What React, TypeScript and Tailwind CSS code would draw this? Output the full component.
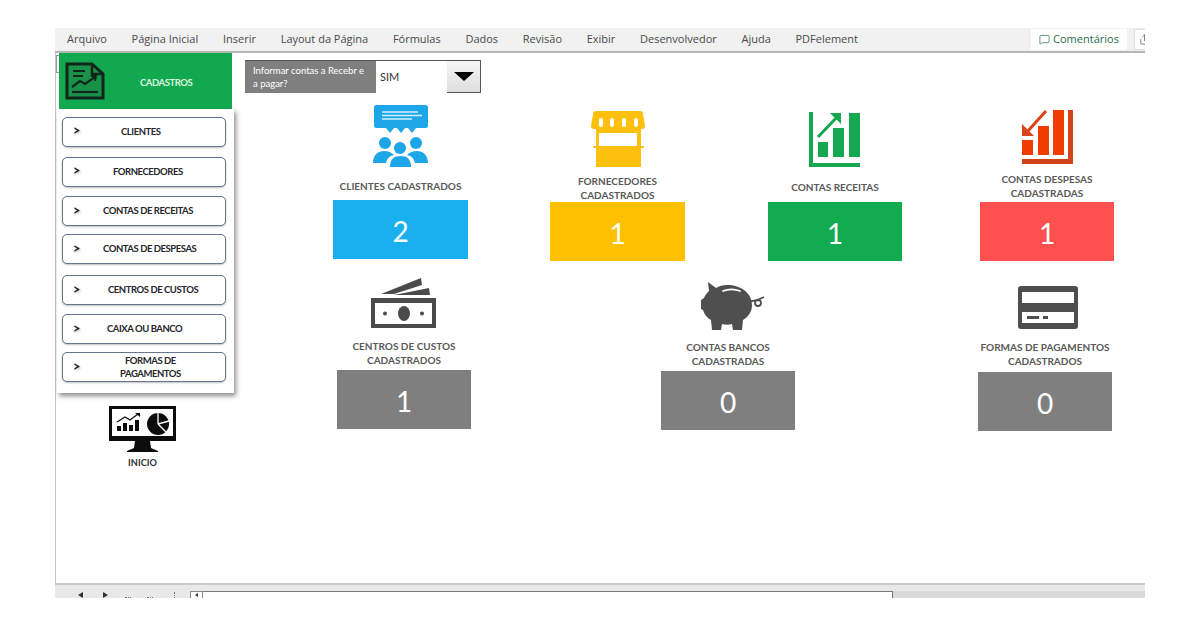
import { MessageSquare, Share } from "lucide-react";

const tabs = [
  "Arquivo",
  "Página Inicial",
  "Inserir",
  "Layout da Página",
  "Fórmulas",
  "Dados",
  "Revisão",
  "Exibir",
  "Desenvolvedor",
  "Ajuda",
  "PDFelement",
];

const menu = [
  { label: ["CLIENTES"], top: "mt-[8px]", shift: "ml-[18px]", lift: "pb-[2px]" },
  { label: ["FORNECEDORES"], top: "mt-[10px]", shift: "ml-[10px]", lift: "pb-[2px]" },
  { label: ["CONTAS DE RECEITAS"], top: "mt-[9px]", shift: "ml-0", lift: "pb-[1px]" },
  { label: ["CONTAS DE DESPESAS"], top: "mt-[8px]", shift: "ml-0", lift: "pb-[1px]" },
  { label: ["CENTROS DE CUSTOS"], top: "mt-[11px]", shift: "ml-[5px]", lift: "pb-[1px]" },
  { label: ["CAIXA OU BANCO"], top: "mt-[9px]", shift: "ml-[4px]", lift: "pb-[1px]" },
  { label: ["FORMAS DE", "PAGAMENTOS"], top: "mt-[8px]", shift: "ml-[17px]", lift: "pb-[1px]" },
];

function ReportIcon() {
  return (
    <svg viewBox="0 0 40 38" className="w-[40px] h-[38px]" fill="none" stroke="#10261a" strokeWidth="3">
      <path d="M2 2h25l11 10v24H2z" fill="#1a9149" />
      <path d="M27 2v10h11" strokeWidth="2.5" />
      <path d="M8 9h12M8 14h10" strokeWidth="2" />
      <path d="M7 25l8-6 5 3 10-7" strokeWidth="2.2" />
      <path d="M26 14l5 0-1 5" strokeWidth="1.8" />
      <path d="M7 30h26" strokeWidth="2.2" />
    </svg>
  );
}

function PeopleIcon() {
  return (
    <svg viewBox="0 0 56 62" className="w-[56px] h-[62px]" fill="#1ea7e8">
      <rect x="1" y="0" width="54" height="23" rx="2.500" />
      <path d="M13 23h8l-4 5zM24 23h8l-4 5zM35 23h8l-4 5z" />
      <path d="M9 7h36M9 10.500h40M9 14h30" stroke="#d5effb" strokeWidth="1.300" />
      <circle cx="12" cy="38" r="6" />
      <circle cx="27" cy="43" r="6" />
      <circle cx="43" cy="38" r="6" />
      <path d="M0 58c0-8 5-12 11-12 5 0 8 2 10 4-5 1-7 4-8 8z" />
      <path d="M55 58c0-8-5-12-11-12-5 0-8 2-10 4 5 1 7 4 8 8z" />
      <path d="M17 62c0-8 4-11 10.500-11S38 54 38 62z" />
    </svg>
  );
}

function StoreIcon() {
  return (
    <svg viewBox="0 0 56 57" className="w-[56px] h-[57px]" fill="#fdc00f">
      <path d="M6 1h44c2 0 3 1 3 3l2 12c0 2-1 3-3 3H4c-2 0-3-1-3-3L3 4c0-2 1-3 3-3z" />
      <rect x="9" y="8" width="4" height="9" rx="2" fill="#fff" />
      <rect x="20" y="8" width="4" height="9" rx="2" fill="#fff" />
      <rect x="32" y="8" width="4" height="9" rx="2" fill="#fff" />
      <rect x="44" y="8" width="4" height="9" rx="2" fill="#fff" />
      <path d="M6 18h45v39H6z" />
      <rect x="9" y="23" width="38" height="14" fill="#fff" />
      <path d="M3 37h51" stroke="#fdc00f" strokeWidth="2" />
    </svg>
  );
}

function GrowthIcon() {
  return (
    <svg viewBox="0 0 52 55" className="w-[52px] h-[55px]" fill="#16a751">
      <path d="M0 0h4v51h47v4H0z" />
      <rect x="9" y="30" width="10" height="15" />
      <rect x="24" y="16" width="11" height="29" />
      <rect x="40" y="1" width="11" height="44" />
      <path d="M9 25L29 4" stroke="#16a751" strokeWidth="3" fill="none" />
      <path d="M21 1h11v11z" />
    </svg>
  );
}

function ExpenseIcon() {
  return (
    <svg viewBox="0 0 51 54" className="w-[51px] h-[54px]" fill="#f03c00">
      <path d="M46 0h5v54H0v-5h46z" fill="#d4431b" />
      <rect x="0" y="30" width="11" height="15" />
      <rect x="16" y="16" width="11" height="29" />
      <rect x="31" y="0" width="11" height="45" />
      <path d="M24 1L5 22" stroke="#d9431b" strokeWidth="3" fill="none" />
      <path d="M0 14l12 12H0z" fill="#d9431b" />
    </svg>
  );
}

function MoneyIcon() {
  return (
    <svg viewBox="0 0 66 51" className="w-[66px] h-[51px]" fill="#4b4b4b">
      <path d="M10 17L50 1l1 7-28 9zM23 18l35-7 1 7z" />
      <path d="M0 21h65v30H0z" />
      <rect x="4" y="26" width="57" height="21" fill="#fff" />
      <ellipse cx="33" cy="36.500" rx="6" ry="7.500" />
      <circle cx="14" cy="36.500" r="2" />
      <circle cx="51" cy="36.500" r="2" />
    </svg>
  );
}

function PiggyIcon() {
  return (
    <svg viewBox="0 0 64 50" className="w-[64px] h-[50px]" fill="#4f4f4f">
      <path d="M7 1l8 6c3-2 7-3 11-3 14 0 25 8 25 20 0 7-4 12-9 15l-1 10h-9l-1-6c-3 1-7 1-10 0l-1 6h-9l-1-10c-4-2-7-6-8-10l-2-1v-9l3-2c1-3 3-5 5-7z" />
      <path d="M22 10c5-2 12-2 17 0" stroke="#fff" strokeWidth="1.800" fill="none" strokeLinecap="round" />
      <path d="M50 20c4 0 9-2 13-4" stroke="#4f4f4f" strokeWidth="1.800" fill="none" />
      <circle cx="57" cy="22" r="3" stroke="#4f4f4f" strokeWidth="1.800" fill="none" />
    </svg>
  );
}

function CardIcon() {
  return (
    <svg viewBox="0 0 60 43" className="w-[60px] h-[43px]" fill="#4f4f4f">
      <rect width="60" height="43" rx="3" />
      <rect x="4" y="6" width="52" height="11" fill="#fff" />
      <rect x="4" y="26" width="52" height="11" fill="#fff" />
      <rect x="9" y="30" width="12" height="3" />
      <rect x="25" y="30" width="5" height="3" />
    </svg>
  );
}

function MonitorIcon() {
  return (
    <svg viewBox="0 0 67 46" className="w-[67px] h-[46px]" fill="#0c0c0c">
      <path d="M0 0h67v35H41l1 7 7 3v1H18v-1l7-3 1-7H0z" />
      <rect x="3" y="3" width="61" height="27" fill="#fff" />
      <rect x="8" y="20" width="4" height="5" />
      <rect x="14" y="17" width="4" height="8" />
      <rect x="20" y="19" width="4" height="6" />
      <rect x="26" y="14" width="4" height="11" />
      <path d="M8 16l8-5 5 3 8-6" stroke="#0c0c0c" strokeWidth="1.200" fill="none" />
      <path d="M26 7h5v4z" />
      <circle cx="49" cy="18" r="11" />
      <path d="M49 18V6M49 18l11-3M49 18l8 8" stroke="#fff" strokeWidth="1.300" />
    </svg>
  );
}

const firstRow = [
  { icon: <PeopleIcon />, label: ["CLIENTES CADASTRADOS"], value: "2", box: "bg-[#1ab0f0] w-[135px] mb-[2px]", place: "ml-[88px]", iconGap: "mb-[12px]", labelGap: "mb-[7px]" },
  { icon: <StoreIcon />, label: ["FORNECEDORES", "CADASTRADOS"], value: "1", box: "bg-[#ffc000] w-[135px]", place: "ml-[82px]", iconGap: "mb-[7px]", labelGap: "mb-0" },
  { icon: <GrowthIcon />, label: ["CONTAS RECEITAS"], value: "1", box: "bg-[#12ab50] w-[134px]", place: "ml-[83px]", iconGap: "mb-[13px]", labelGap: "mb-[8px]" },
  { icon: <ExpenseIcon />, label: ["CONTAS DESPESAS", "CADASTRADAS"], value: "1", box: "bg-[#ff5050] w-[134px]", place: "ml-[78px]", iconGap: "mb-[8px]", labelGap: "mb-[2px]" },
];

const secondRow = [
  { icon: <MoneyIcon />, label: ["CENTROS DE CUSTOS", "CADASTRADOS"], value: "1", box: "bg-[#7f7f7f] w-[134px] mb-[2px]", place: "ml-[92px]", iconGap: "mb-[11px]", labelGap: "mb-[3px]" },
  { icon: <PiggyIcon />, label: ["CONTAS BANCOS", "CADASTRADAS"], value: "0", box: "bg-[#7f7f7f] w-[134px] mb-[1px]", place: "ml-[190px]", iconGap: "mb-[9px] ml-[10px]", labelGap: "mb-[3px]" },
  { icon: <CardIcon />, label: ["FORMAS DE PAGAMENTOS", "CADASTRADOS"], value: "0", box: "bg-[#7f7f7f] w-[134px]", place: "ml-[183px]", iconGap: "mb-[11px] ml-[6px]", labelGap: "mb-[4px]" },
];

type Stat = (typeof firstRow)[number];

function StatCard({ stat }: { stat: Stat }) {
  return (
    <div className={`flex flex-col items-center justify-end ${stat.place}`}>
      <div className={`flex ${stat.iconGap}`}>{stat.icon}</div>
      <div className={`font-['Lato',sans-serif] font-bold text-[10px] leading-[14px] text-[#595959] text-center whitespace-nowrap ${stat.labelGap}`}>
        {stat.label.map((l) => (
          <div key={l}>{l}</div>
        ))}
      </div>
      <div className={`h-[59px] pt-[2px] flex items-center justify-center text-white text-[28px] font-['Lato',sans-serif] ${stat.box}`}>
        {stat.value}
      </div>
    </div>
  );
}

export default function App() {
  return (
    <div className="w-[1200px] h-[627px] bg-white pt-[28px] pl-[55px] overflow-hidden">
      <div className="w-[1090px] h-[570px] flex flex-col overflow-hidden">
        <div className="h-[25px] shrink-0 flex items-center bg-[#f1f1f1] border-b-2 border-[#b5b5b5] pl-[12px] font-['Open_Sans',sans-serif] text-[11px] text-[#4a4a4a]">
          <div className="flex items-center gap-[24.700px]">
            {tabs.map((tab) => (
              <span key={tab} className="whitespace-nowrap">{tab}</span>
            ))}
          </div>
          <div className="ml-auto flex items-center">
            <div className="w-[96px] h-[21px] bg-white flex items-center justify-center gap-[3px] text-[#1f6e48] text-[11px] font-medium">
              <MessageSquare className="w-[11px] h-[11px]" strokeWidth={1.5} />
              Comentários
            </div>
            <div className="w-[11px] h-[21px] ml-[7px] bg-white border-l border-t border-b border-[#dddddd] flex items-center pl-[4px] overflow-hidden">
              <Share className="w-[11px] h-[11px] text-[#777] shrink-0" />
            </div>
          </div>
        </div>

        <div className="h-[530px] shrink-0 flex border-l border-[#c4c4c4]">
          <div className="w-[189px] shrink-0 flex flex-col">
            <div className="h-[56px] shrink-0 flex">
              <div className="w-[3px] h-[18px] mt-[2px] border-l border-t border-b border-[#999999]" />
              <div className="w-[173px] h-[56px] bg-[#12a84f] flex items-center pl-[6px]">
                <ReportIcon />
                <span className="ml-[35px] pt-[4px] font-['Lato',sans-serif] font-bold text-[9.500px] text-[#d8f7de] tracking-[-0.45px]">CADASTROS</span>
              </div>
            </div>
            <div className="ml-[1px] w-[177px] h-[284px] shrink-0 bg-white flex flex-col pl-[5px] shadow-[2px_3px_5px_rgba(0,0,0,0.45)]">
              {menu.map((item) => (
                <div
                  key={item.label[0]}
                  className={`w-[164px] h-[30px] shrink-0 flex items-center pl-[10px] bg-white border-[1.5px] border-[#66748c] rounded-[5px] shadow-[0_1px_2px_rgba(0,0,0,0.25)] ${item.top} ${item.lift}`}
                >
                  <span className="w-[30px] shrink-0 font-['Lato',sans-serif] font-black text-[13px] text-[#222] drop-shadow-[1px_1px_1px_rgba(0,0,0,0.3)]">&gt;</span>
                  <div className={`font-['Lato',sans-serif] font-bold text-[9.500px] leading-[13px] tracking-[-0.45px] text-[#26262b] text-center whitespace-nowrap ${item.shift}`}>
                    {item.label.map((l) => (
                      <div key={l}>{l}</div>
                    ))}
                  </div>
                </div>
              ))}
            </div>
            <div className="ml-[53px] mt-[13px] w-[67px] flex flex-col items-center">
              <MonitorIcon />
              <span className="mt-[4px] font-['Lato',sans-serif] font-bold text-[9.200px] text-[#333]">INICIO</span>
            </div>
          </div>

          <div className="flex-1 flex flex-col pt-[7px]">
            <div className="w-[236px] h-[33px] shrink-0 flex border-t border-r border-[#555]">
              <div className="w-[131px] bg-[#7f7f7f] text-white font-['Lato',sans-serif] text-[9.500px] leading-[12.500px] pl-[8px] pt-[4px] whitespace-nowrap">
                Informar contas a Recebr e<br />a pagar?
              </div>
              <div className="flex-1 bg-white font-['Lato',sans-serif] text-[11px] text-[#333] pl-[4px] pt-[8px]">SIM</div>
              <div className="w-[33px] border-b border-[#555] bg-linear-to-b from-[#f6f6f6] to-[#dedede] flex items-center justify-center">
                <div className="w-0 h-0 border-l-[10px] border-r-[10px] border-t-[9px] border-l-transparent border-r-transparent border-t-black" />
              </div>
            </div>
            <div className="h-[168px] shrink-0 flex">
              {firstRow.map((stat) => (
                <StatCard key={stat.label[0]} stat={stat} />
              ))}
            </div>
            <div className="h-[170px] shrink-0 flex">
              {secondRow.map((stat) => (
                <StatCard key={stat.label[0]} stat={stat} />
              ))}
            </div>
          </div>
        </div>

        <div className="h-[15px] shrink-0 flex bg-[#e9e9e9] border-t-2 border-[#c9c9c9] pl-[23px] pt-[6px]">
          <div className="flex items-center h-full">
            <div className="w-0 h-0 border-y-[3px] border-r-[5px] border-y-transparent border-r-[#333]" />
            <div className="ml-[20px] w-0 h-0 border-y-[3px] border-l-[5px] border-y-transparent border-l-[#333]" />
            <div className="ml-[17px] w-[6px] h-[1px] mt-[6px] border-t border-dotted border-[#777]" />
            <div className="ml-[16px] w-[6px] h-[1px] mt-[6px] border-t border-dotted border-[#777]" />
            <div className="ml-[21px] w-[2px] h-[6px] border-l border-dotted border-[#777]" />
          </div>
          <div className="ml-[14px] w-[13px] h-full bg-white border-l border-r border-t border-[#888] flex items-center justify-center">
            <div className="w-0 h-0 border-y-[2px] border-r-[3px] border-y-transparent border-r-[#333]" />
          </div>
          <div className="w-[690px] h-full bg-white border-t border-r border-[#777]" />
          <div className="flex-1 h-full bg-[#d9d9d9]" />
        </div>
      </div>
    </div>
  );
}
